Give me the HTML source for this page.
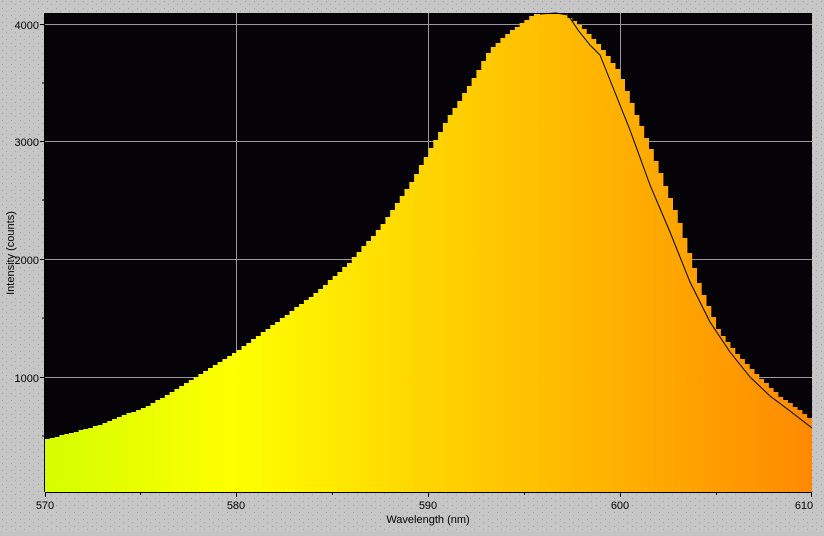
<!DOCTYPE html><html><head><style>body{margin:0;background:#c4c4c4;width:824px;height:531px;overflow:hidden;font-family:"Liberation Sans",sans-serif}</style></head><body>
<svg width="824" height="531" xmlns="http://www.w3.org/2000/svg" font-family="Liberation Sans, sans-serif" font-size="11">
<defs><linearGradient id="g" x1="45" x2="812" y1="0" y2="0" gradientUnits="userSpaceOnUse">
<stop offset="0" stop-color="#d4ff00"/><stop offset="0.25" stop-color="#ffff00"/><stop offset="0.5" stop-color="#ffd400"/><stop offset="0.75" stop-color="#ffb000"/><stop offset="1" stop-color="#ff8a00"/></linearGradient>
<pattern id="n" width="9" height="7" patternUnits="userSpaceOnUse"><rect width="9" height="7" fill="#c6c6c6"/><rect x="2" y="1" width="1" height="1" fill="#a0a0a0"/><rect x="6" y="4" width="1" height="1" fill="#a8a8a8"/></pattern></defs>
<rect width="824" height="531" fill="url(#n)"/>
<rect x="45" y="13" width="767" height="479" fill="#050307"/>
<g stroke="#9a9a9a" stroke-width="1"><line x1="236.5" y1="13" x2="236.5" y2="492"/><line x1="428.5" y1="13" x2="428.5" y2="492"/><line x1="620.5" y1="13" x2="620.5" y2="492"/>
<line x1="45" y1="24.5" x2="812" y2="24.5"/><line x1="45" y1="141.5" x2="812" y2="141.5"/><line x1="45" y1="259.5" x2="812" y2="259.5"/><line x1="45" y1="377.5" x2="812" y2="377.5"/></g>
<polygon id="spec" fill="url(#g)" points="45,492 45,440 812,420 812,492"/>
<polyline fill="none" stroke="#000" stroke-width="1" points="540,14 556,13 568,15 578,30 590,45 600,55 612,85 630,130 650,185 670,232 690,282 710,322 730,352 750,377 770,396 790,411 812,428"/>
<g stroke="#000"><line x1="45" y1="492.5" x2="812" y2="492.5"/><line x1="44.5" y1="13" x2="44.5" y2="492"/>
<line x1="40" y1="24.5" x2="45" y2="24.5"/><line x1="40" y1="141.5" x2="45" y2="141.5"/><line x1="40" y1="259.5" x2="45" y2="259.5"/><line x1="40" y1="377.5" x2="45" y2="377.5"/>
<line x1="45.5" y1="492" x2="45.5" y2="497"/><line x1="236.5" y1="492" x2="236.5" y2="497"/><line x1="428.5" y1="492" x2="428.5" y2="497"/><line x1="620.5" y1="492" x2="620.5" y2="497"/><line x1="811.5" y1="492" x2="811.5" y2="497"/>
<line x1="140.5" y1="492" x2="140.5" y2="495"/><line x1="332.5" y1="492" x2="332.5" y2="495"/><line x1="524.5" y1="492" x2="524.5" y2="495"/><line x1="716.5" y1="492" x2="716.5" y2="495"/>
<line x1="42" y1="83" x2="45" y2="83"/><line x1="42" y1="200" x2="45" y2="200"/><line x1="42" y1="318" x2="45" y2="318"/><line x1="42" y1="436" x2="45" y2="436"/></g>
<g fill="#000" text-anchor="end"><text x="39" y="29">4000</text><text x="39" y="146">3000</text><text x="39" y="264">2000</text><text x="39" y="382">1000</text></g>
<g fill="#000" text-anchor="middle"><text x="45" y="509">570</text><text x="236" y="509">580</text><text x="428" y="509">590</text><text x="620" y="509">600</text><text x="804" y="509">610</text>
<text x="428" y="523">Wavelength (nm)</text>
<text transform="translate(14,253) rotate(-90)">Intensity (counts)</text></g>
</svg>
<script>
var P=[[45,440],[100,425],[150,405],[200,375],[236,352],[280,320],[320,290],[350,262],[380,228],[410,185],[430,150],[450,115],[470,85],[490,50],[510,32],[535,14],[565,14],[580,25],[600,45],[620,72],[640,122],[655,158],[680,222],[700,285],[720,332],[740,357],[760,377],[780,396],[800,410],[812,420]];
function f(x){for(var i=1;i<P.length;i++){if(x<=P[i][0]){var a=P[i-1],b=P[i];return a[1]+(b[1]-a[1])*(x-a[0])/(b[0]-a[0]);}}return P[P.length-1][1];}
var s="45,492 ",w=767/160;
for(var k=0;k<160;k++){var x0=45+k*w,x1=x0+w,y=Math.round(f(x0+w/2));s+=x0.toFixed(1)+","+y+" "+x1.toFixed(1)+","+y+" ";}
s+="812,492";document.getElementById("spec").setAttribute("points",s);
</script>
</body></html>
